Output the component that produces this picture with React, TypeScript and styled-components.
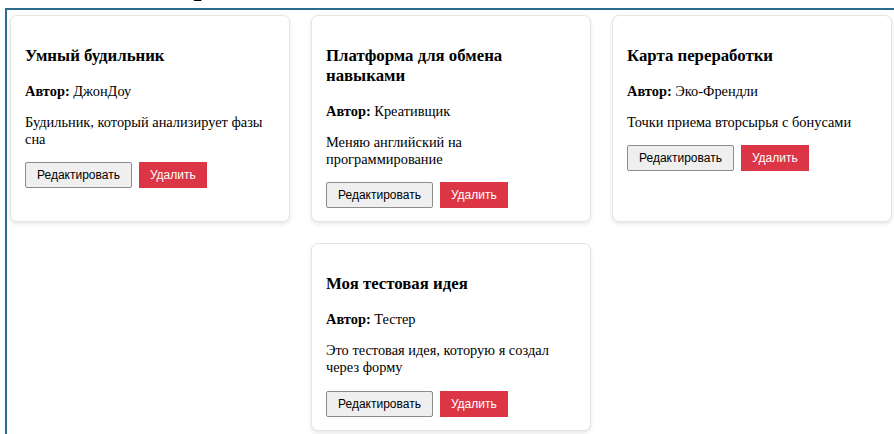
import React from 'react';
import styled, { createGlobalStyle } from 'styled-components';

const GlobalStyle = createGlobalStyle`
  html, body {
    margin: 0;
    padding: 0;
    background: #fff;
    overflow: hidden;
  }
  body {
    font-family: "Liberation Serif", "Times New Roman", serif;
    color: #000;
  }
`;

type Idea = {
  id: number;
  title: string;
  author: string;
  description: string;
};

const ideas: Idea[] = [
  { id: 1, title: 'Умный будильник', author: 'ДжонДоу', description: 'Будильник, который анализирует фазы сна' },
  { id: 2, title: 'Платформа для обмена навыками', author: 'Креативщик', description: 'Меняю английский на программирование' },
  { id: 3, title: 'Карта переработки', author: 'Эко-Френдли', description: 'Точки приема вторсырья с бонусами' },
  { id: 4, title: 'Моя тестовая идея', author: 'Тестер', description: 'Это тестовая идея, которую я создал через форму' },
];

// page heading sits above the list (scrolled mostly out of view)
const Heading = styled.h1`
  font-size: 28.8px;
  line-height: 33px;
  font-weight: bold;
  text-align: center;
  margin: -31px 0 6px;
  padding-left: 10px;
  white-space: nowrap;
`;

const List = styled.div`
  box-sizing: border-box;
  width: 892px;
  margin-left: 5px;
  border: 2px solid #2b6c8c;
  padding: 5px 0;
  display: flex;
  flex-wrap: wrap;
  justify-content: center;
  gap: 21px;
`;

const Card = styled.div`
  box-sizing: border-box;
  width: 280px;
  padding: 13px 14px;
  background: #fff;
  border: 1px solid #e4e4e4;
  border-radius: 7px;
  box-shadow: 0 2px 4px rgba(0, 0, 0, 0.1);
`;

const Title = styled.h3`
  font-size: 16.8px;
  font-weight: bold;
  margin: 16.8px 0;
`;

const Text = styled.p`
  font-size: 14.4px;
  margin: 14.4px 0;
`;

const Actions = styled.div`
  display: flex;
  gap: 7px;
`;

const Button = styled.button<{ $danger?: boolean }>`
  font-family: "Liberation Sans", Arial, sans-serif;
  font-size: 12px;
  height: 26px;
  padding: 0 11px;
  border-radius: ${(p) => (p.$danger ? '0' : '2px')};
  border: ${(p) => (p.$danger ? 'none' : '1px solid #8c8c8c')};
  background: ${(p) => (p.$danger ? '#dc3545' : '#efefef')};
  color: ${(p) => (p.$danger ? '#fff' : '#000')};
  cursor: pointer;
`;

export default function App() {
  return (
    <>
      <GlobalStyle />
      <Heading>Проекты: каталог наших идей и их планов</Heading>
      <List>
        {ideas.map((idea) => (
          <Card key={idea.id}>
            <Title>{idea.title}</Title>
            <Text>
              <strong>Автор:</strong> {idea.author}
            </Text>
            <Text>{idea.description}</Text>
            <Actions>
              <Button>Редактировать</Button>
              <Button $danger>Удалить</Button>
            </Actions>
          </Card>
        ))}
      </List>
    </>
  );
}
